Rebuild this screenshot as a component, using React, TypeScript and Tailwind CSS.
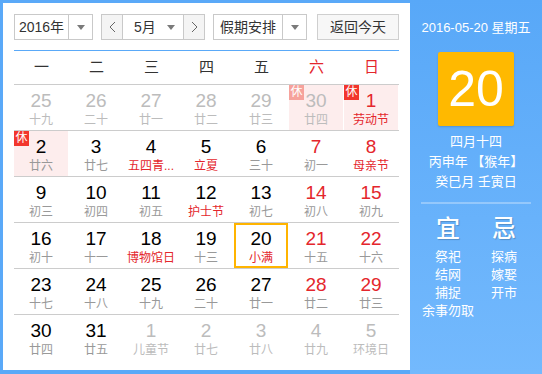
import React from "react";

type Cell = {
  d: number;
  l: string;
  other?: boolean;
  lred?: boolean;
  nred?: boolean;
  xiu?: boolean;
  sel?: boolean;
};

const rows: Cell[][] = [
  [
    { d: 25, l: "十九", other: true },
    { d: 26, l: "二十", other: true },
    { d: 27, l: "廿一", other: true },
    { d: 28, l: "廿二", other: true },
    { d: 29, l: "廿三", other: true },
    { d: 30, l: "廿四", other: true, xiu: true },
    { d: 1, l: "劳动节", lred: true, xiu: true },
  ],
  [
    { d: 2, l: "廿六", xiu: true },
    { d: 3, l: "廿七" },
    { d: 4, l: "五四青...", lred: true },
    { d: 5, l: "立夏", lred: true },
    { d: 6, l: "三十" },
    { d: 7, l: "初一" },
    { d: 8, l: "母亲节", lred: true },
  ],
  [
    { d: 9, l: "初三" },
    { d: 10, l: "初四" },
    { d: 11, l: "初五" },
    { d: 12, l: "护士节", lred: true },
    { d: 13, l: "初七" },
    { d: 14, l: "初八" },
    { d: 15, l: "初九" },
  ],
  [
    { d: 16, l: "初十" },
    { d: 17, l: "十一" },
    { d: 18, l: "博物馆日", lred: true },
    { d: 19, l: "十三" },
    { d: 20, l: "小满", lred: true, sel: true },
    { d: 21, l: "十五" },
    { d: 22, l: "十六" },
  ],
  [
    { d: 23, l: "十七" },
    { d: 24, l: "十八" },
    { d: 25, l: "十九" },
    { d: 26, l: "二十" },
    { d: 27, l: "廿一" },
    { d: 28, l: "廿二" },
    { d: 29, l: "廿三" },
  ],
  [
    { d: 30, l: "廿四" },
    { d: 31, l: "廿五" },
    { d: 1, l: "儿童节", other: true },
    { d: 2, l: "廿七", other: true },
    { d: 3, l: "廿八", other: true },
    { d: 4, l: "廿九", other: true },
    { d: 5, l: "环境日", other: true },
  ],
];

const weekdays = ["一", "二", "三", "四", "五", "六", "日"];

function Caret() {
  return (
    <svg width="8" height="5" viewBox="0 0 8 5">
      <path d="M0 0 L8 0 L4 5 Z" fill="#7a7a7a" />
    </svg>
  );
}

function Chevron({ dir }: { dir: "l" | "r" }) {
  return (
    <svg width="7" height="12" viewBox="0 0 7 12">
      <polyline
        points={dir === "l" ? "6,1 1,6 6,11" : "1,1 6,6 1,11"}
        fill="none"
        stroke="#666"
        strokeWidth="1"
      />
    </svg>
  );
}

function DayCell({ c, col }: { c: Cell; col: number }) {
  const weekend = col >= 5;
  let numColor = "text-black";
  if (c.other) numColor = "text-[#bcbcbc]";
  else if (weekend || c.nred) numColor = "text-[#e4262c]";
  let lunColor = "text-[#999]";
  if (c.other) lunColor = "text-[#bcbcbc]";
  else if (c.lred) lunColor = "text-[#e4262c]";
  const bg = c.xiu ? "bg-[#fdeded]" : "";
  const sel = c.sel ? "border-2 border-[#ffb400] pt-[3px]" : "pt-[5px]";
  return (
    <div className="h-full w-[55px]">
      <div className={`relative flex h-full w-[54px] flex-col items-center ${bg} ${sel}`}>
        {c.xiu && (
          <div
            className={`absolute left-0 top-0 h-[15px] w-[15px] text-center text-[12px] leading-[15px] text-white ${
              c.other ? "bg-[#f6a29c]" : "bg-[#f2362d]"
            }`}
          >
            休
          </div>
        )}
        <div className={`text-[19px] leading-[22px] ${numColor}`}>{c.d}</div>
        <div className={`whitespace-nowrap text-[12px] leading-[16px] ${lunColor}`}>{c.l}</div>
      </div>
    </div>
  );
}

export default function App() {
  return (
    <div className="flex h-[374px] w-[542px] font-['Liberation_Sans','Noto_Sans_CJK_SC',sans-serif] bg-[#5aa9f8]">
      {/* main */}
      <div className="w-[410px] border-b-[4px] border-l-[3px] border-t-[3px] border-[#5aa9f8]">
        <div className="h-full bg-white px-[11px] pt-[11px]">
          {/* controls */}
          <div className="flex h-[26px] items-stretch text-[14px] text-[#333]">
            <div className="flex w-[79px] border border-[#c9c9c9] bg-white">
              <div className="flex w-[54px] items-center justify-center border-r border-[#c9c9c9]">2016年</div>
              <div className="flex flex-1 items-center justify-center">
                <Caret />
              </div>
            </div>
            <div className="ml-[8px] flex w-[104px] border border-[#c9c9c9]">
              <div className="flex w-[21px] items-center justify-center border-r border-[#c9c9c9] bg-[#f4f4f4]">
                <Chevron dir="l" />
              </div>
              <div className="flex flex-1 items-center bg-white pl-[11px] pr-[8px]">
                <span className="flex-1">5月</span>
                <Caret />
              </div>
              <div className="flex w-[21px] items-center justify-center border-l border-[#c9c9c9] bg-[#f4f4f4]">
                <Chevron dir="r" />
              </div>
            </div>
            <div className="ml-[8px] flex w-[94px] border border-[#c9c9c9] bg-white">
              <div className="flex w-[69px] items-center justify-center border-r border-[#c9c9c9]">假期安排</div>
              <div className="flex flex-1 items-center justify-center">
                <Caret />
              </div>
            </div>
            <div className="ml-[10px] flex w-[82px] items-center justify-center border border-[#cfcfcf] bg-[#f7f7f7]">
              返回今天
            </div>
          </div>
          <div className="mt-[10px] h-px bg-[#5aa9f8]" />
          {/* weekday header */}
          <div className="flex h-[34px] border-b border-[#cccccc]">
            {weekdays.map((w, i) => (
              <div
                key={w}
                className={`flex w-[55px] items-center justify-center text-[15px] ${
                  i >= 5 ? "text-[#e4262c]" : "text-[#333]"
                }`}
              >
                {w}
              </div>
            ))}
          </div>
          {rows.map((r, ri) => (
            <div
              key={ri}
              className={`flex ${ri < rows.length - 1 ? "h-[46px] border-b border-[#cccccc]" : "h-[45px]"}`}
            >
              {r.map((c, ci) => (
                <DayCell key={ci} c={c} col={ci} />
              ))}
            </div>
          ))}
        </div>
      </div>
      {/* right panel */}
      <div className="flex w-[132px] flex-col items-center bg-gradient-to-b from-[#58a8f8] to-[#73b9fd] text-white">
        <div className="mt-[18px] text-[13px] leading-[20px]">2016-05-20 星期五</div>
        <div className="mt-[14px] flex h-[74px] w-[76px] items-center justify-center rounded-[2px] bg-[#ffb900] text-[50px] leading-none shadow-[0_1px_2px_rgba(0,0,0,0.15)]">
          20
        </div>
        <div className="mt-[6px] flex flex-col items-center text-[13px] leading-[20px]">
          <div>四月十四</div>
          <div>丙申年 【猴年】</div>
          <div>癸巳月 壬寅日</div>
        </div>
        <div className="mt-[10px] h-[2px] w-[110px] bg-white/30" />
        <div className="mt-[11px] grid w-[112px] grid-cols-2">
          <div className="text-center text-[24px] font-medium leading-[28px] [text-shadow:1px_1px_1px_rgba(0,0,0,0.2)]">宜</div>
          <div className="text-center text-[24px] font-medium leading-[28px] [text-shadow:1px_1px_1px_rgba(0,0,0,0.2)]">忌</div>
          <div className="mt-[5px] flex flex-col items-center text-[13px] leading-[18px]">
            <div>祭祀</div>
            <div>结网</div>
            <div>捕捉</div>
            <div>余事勿取</div>
          </div>
          <div className="mt-[5px] flex flex-col items-center text-[13px] leading-[18px]">
            <div>探病</div>
            <div>嫁娶</div>
            <div>开市</div>
          </div>
        </div>
      </div>
    </div>
  );
}
